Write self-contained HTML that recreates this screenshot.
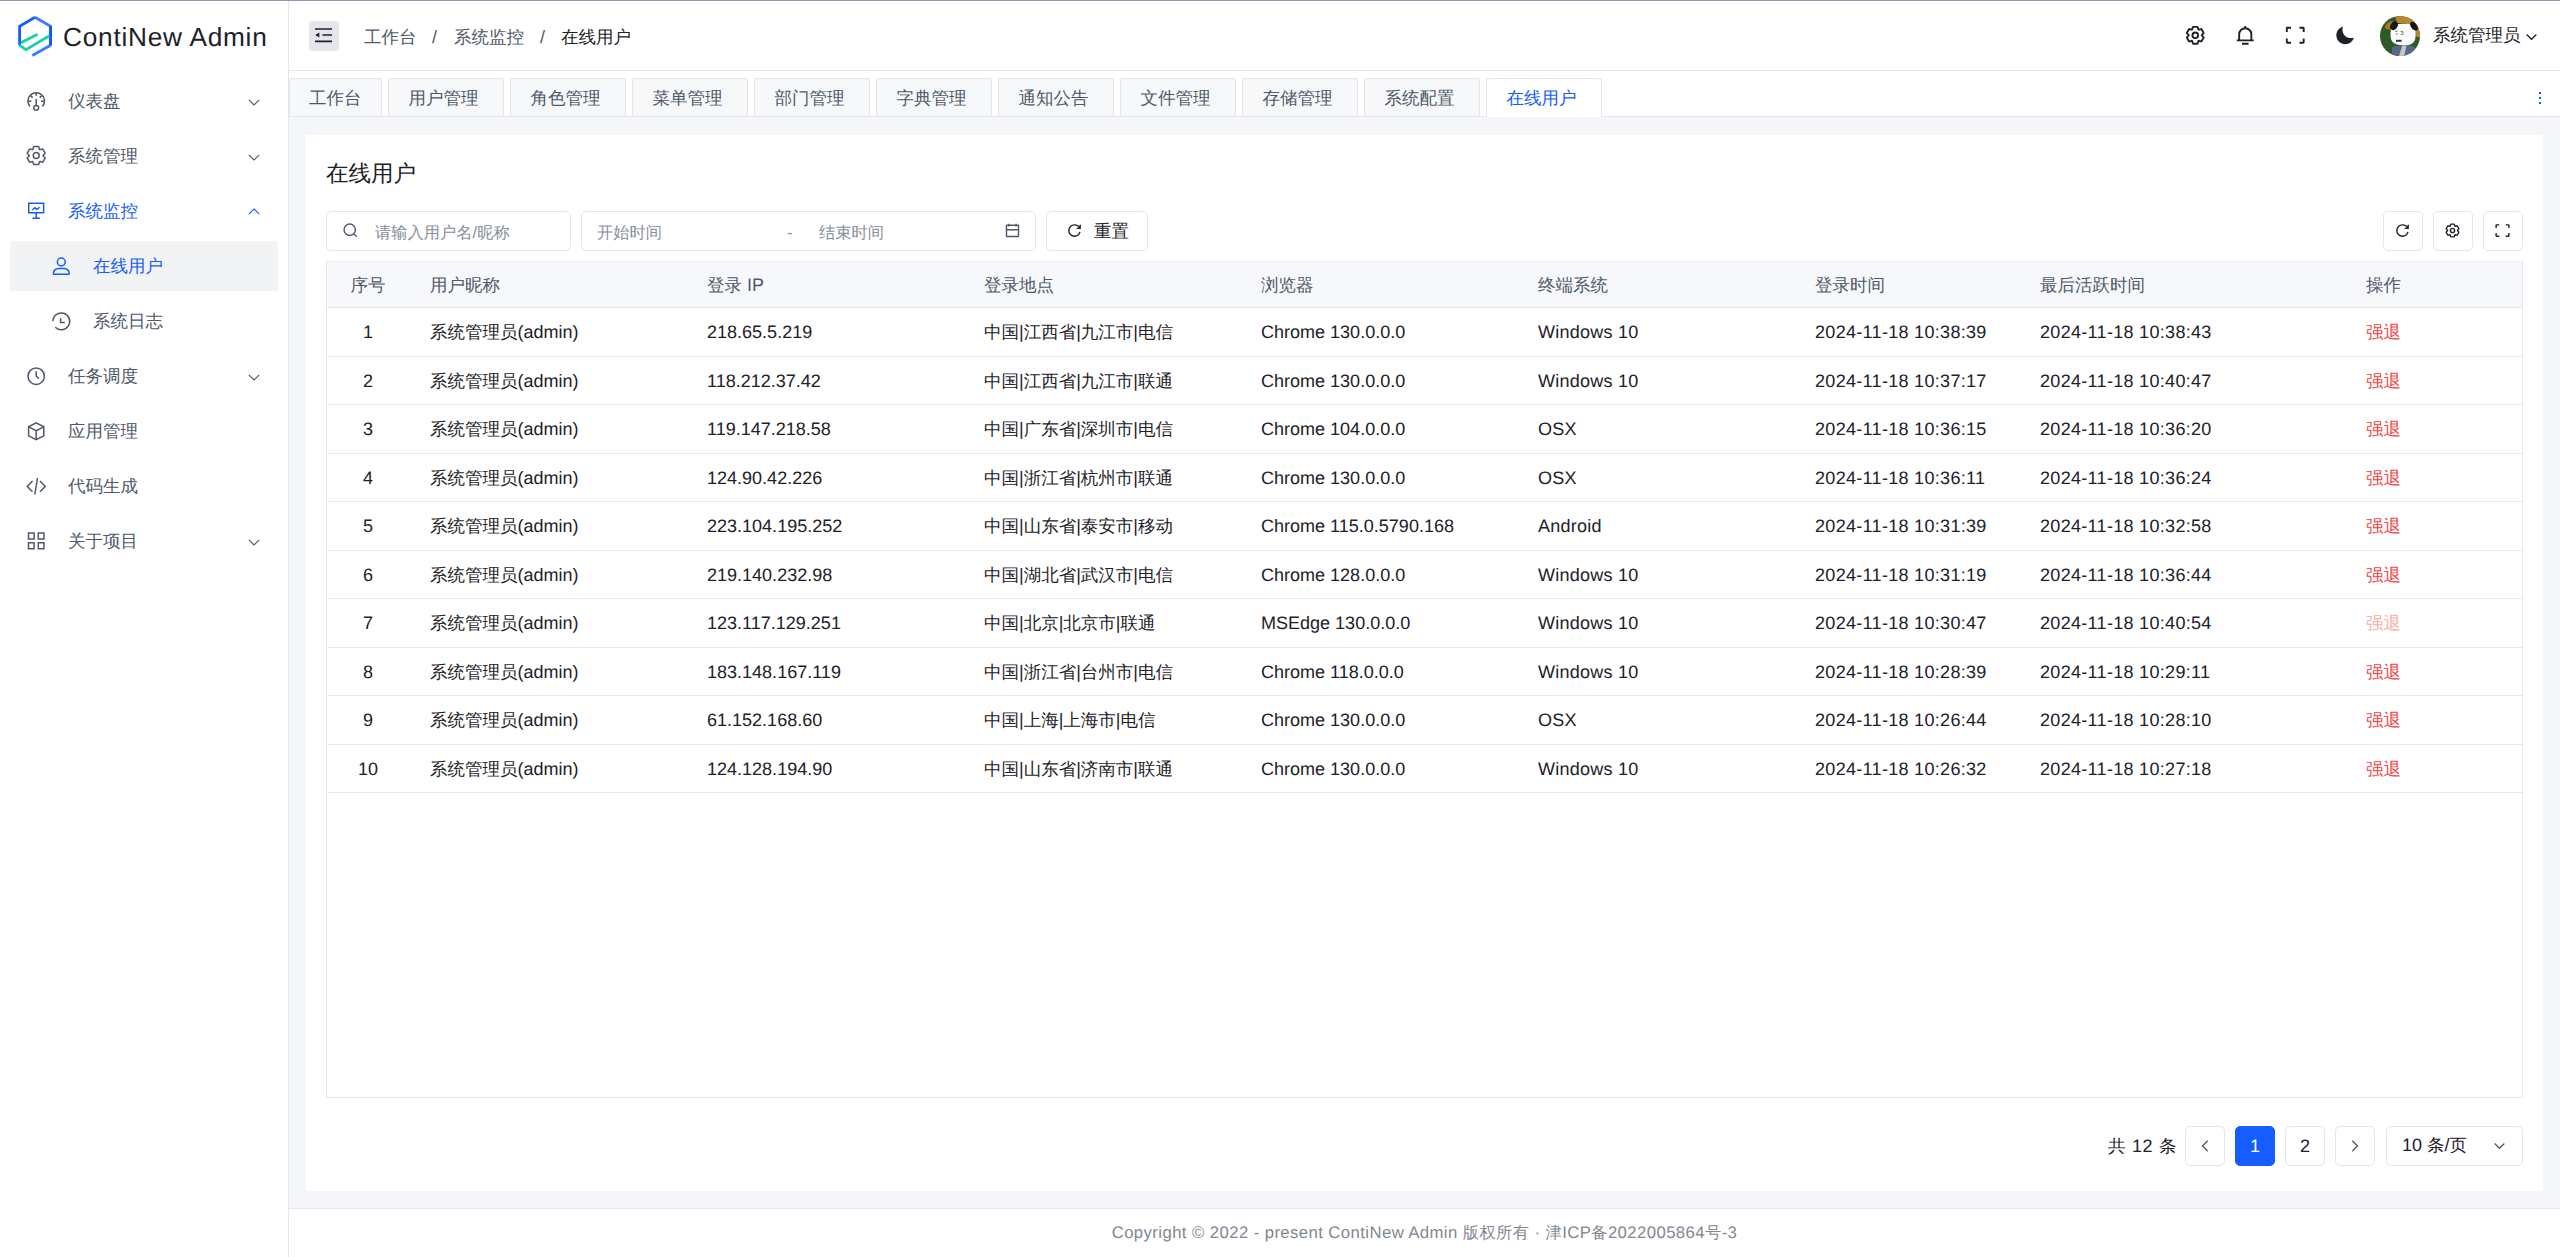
<!DOCTYPE html><html><head><meta charset="utf-8"><style>@font-face{font-family:"LS";src:local("Liberation Sans");size-adjust:103%;unicode-range:U+0000-024F,U+2010-206F}
*{box-sizing:border-box;margin:0;padding:0}
html,body{width:2560px;height:1257px;overflow:hidden;background:#fff}
body{font-family:"LS","Liberation Sans",sans-serif;font-size:17.5px;text-rendering:geometricPrecision;color:#1d2129;position:relative}
.abs{position:absolute}
svg{display:block;overflow:visible}
#topline{left:0;top:0;width:2560px;height:1px;background:#8a9ab0;z-index:5}
#side{left:0;top:0;width:289px;height:1257px;border-right:1px solid #e5e6eb;background:#fff}
.logo-t{left:63px;top:18px;font-size:25.5px;line-height:38px;color:#1d2129;letter-spacing:0.75px}
.mt{line-height:50px;white-space:nowrap}
#hdr{left:289px;top:0;width:2271px;height:71px;border-bottom:1px solid #e5e6eb;background:#fff}
.bc{top:2px;line-height:71px;color:#4e5969}
#tabs{left:289px;top:71px;width:2271px;height:46px;background:#fff;border-bottom:1px solid #e5e6eb}
.tab{position:absolute;top:78px;height:38px;border:1px solid #e5e6eb;border-bottom:none;border-radius:3px 3px 0 0;background:#f7f8fa;color:#4e5969;line-height:39px;white-space:nowrap}
.tab span{position:absolute;top:0}
.tab.on{background:#fff;color:#165dff;height:39px;z-index:2}
#content{left:289px;top:117px;width:2271px;height:1091px;background:#f4f6fa}
#card{left:306px;top:135px;width:2237px;height:1056px;background:#fff}
#footer{left:289px;top:1208px;width:2271px;height:49px;border-top:1px solid #e5e6eb;background:#fff;text-align:center;color:#7f8894;font-size:16.25px;line-height:48px;letter-spacing:0.41px}
.inp{position:absolute;top:211px;height:40px;border:1px solid #e2e6ed;border-radius:5px;background:#fff}
.ph{position:absolute;line-height:38px;color:#86909c;font-size:16.25px;white-space:nowrap}
.btn{position:absolute;top:211px;width:40px;height:40px;border:1px solid #e2e6ed;border-radius:5px;background:#fff}
#tbl{left:326px;top:261px;width:2197px;height:837px;border:1px solid #e4e7ee;border-top:none;background:#fff}
.th{top:262px;line-height:47px;color:#4e5969;white-space:nowrap}
.td{line-height:48px;color:#1d2129;white-space:nowrap}
.red{color:#f53f3f}
.red.dis{color:#fbaca3}
.pg{position:absolute;top:1126px;width:40px;height:40px;border:1px solid #e2e6ed;border-radius:5px;background:#fff;text-align:center;line-height:38px;color:#1d2129}
</style></head><body>
<div id="topline" class="abs"></div>
<div id="side" class="abs"></div>
<svg class="abs" style="left:14px;top:13px" width="42" height="44" viewBox="14 13 42 44">
<g fill="none" stroke-width="2.8" stroke-linecap="butt" stroke-linejoin="miter">
<path d="M19.6 45.3 V26.2 L35 17.2" stroke="#165dff"/>
<path d="M35 17.2 L50.6 26.2 V45.3" stroke="#3a7bff"/>
<path d="M50.6 45.3 L32.3 55.4" stroke="#3a7bff"/>
<path d="M50.6 26.2 V45.3" stroke="#1551ff"/>
<path d="M21 42.8 L37.6 34.3" stroke="#19d0a8"/>
<path d="M19.2 45 L26 49.6 L49.4 35.8" stroke="#19d0a8"/>
</g></svg>
<div class="abs logo-t">ContiNew Admin</div>
<svg style="position:absolute;left:20px;top:85px;width:32px;height:32px;color:#4e5969" viewBox="0 0 32 32" fill="none" stroke="currentColor" stroke-width="1.5" stroke-linecap="butt" stroke-linejoin="miter"><path d="M9.9 21.4A8.3 8.3 0 1 1 22.5 21.4"/><path d="M16.2 8V10.8M10.6 10.6 12.6 12.6M21.8 10.6 19.8 12.6M7.9 16.3H11.4M21 16.3H24.5M16.2 14V20.3"/><circle cx="16.2" cy="22.8" r="2.4"/></svg>
<div class="abs mt" style="left:68px;top:76px;color:#4e5969">仪表盘</div>
<svg style="position:absolute;left:245.5px;top:94px;width:16px;height:16px;color:#4e5969" viewBox="0 0 48 48" fill="none" stroke="currentColor" stroke-width="3.4" ><path d="M39.6 17.443 24.043 33 8.487 17.443"/></svg>
<svg style="position:absolute;left:20px;top:140px;width:32px;height:32px;color:#4e5969" viewBox="0 0 32 32" fill="none" stroke="currentColor" stroke-width="1.5" stroke-linecap="butt" stroke-linejoin="miter"><g transform="translate(16.2 15.6) scale(0.5) translate(-24 -24)" stroke-width="3"><path d="M18.797 6.732A1 1 0 0 1 19.76 6h8.48a1 1 0 0 1 .964.732l1.285 4.628a1 1 0 0 0 1.213.7l4.651-1.2a1 1 0 0 1 1.116.468l4.24 7.344a1 1 0 0 1-.153 1.2L38.193 23.3a1 1 0 0 0 0 1.402l3.364 3.427a1 1 0 0 1 .153 1.2l-4.24 7.344a1 1 0 0 1-1.116.468l-4.65-1.2a1 1 0 0 0-1.214.7l-1.285 4.628a1 1 0 0 1-.964.732h-8.48a1 1 0 0 1-.963-.732L17.51 36.64a1 1 0 0 0-1.213-.7l-4.65 1.2a1 1 0 0 1-1.116-.468l-4.24-7.344a1 1 0 0 1 .153-1.2L9.809 24.7a1 1 0 0 0 0-1.402l-3.364-3.427a1 1 0 0 1-.153-1.2l4.24-7.344a1 1 0 0 1 1.116-.468l4.65 1.2a1 1 0 0 0 1.213-.7l1.286-4.628Z"/><path d="M30 24a6 6 0 1 1-12 0 6 6 0 0 1 12 0Z"/></g></svg>
<div class="abs mt" style="left:68px;top:131px;color:#4e5969">系统管理</div>
<svg style="position:absolute;left:245.5px;top:149px;width:16px;height:16px;color:#4e5969" viewBox="0 0 48 48" fill="none" stroke="currentColor" stroke-width="3.4" ><path d="M39.6 17.443 24.043 33 8.487 17.443"/></svg>
<svg style="position:absolute;left:20px;top:195px;width:32px;height:32px;color:#165dff" viewBox="0 0 32 32" fill="none" stroke="currentColor" stroke-width="1.5" stroke-linecap="butt" stroke-linejoin="miter"><path d="M8.75 8.35H23.65V17.85H8.75Z"/><path d="M16.2 17.85V23.3M12.5 23.3H19.9"/><path d="M12.3 15 14.9 12.8 16.8 14.6 19.5 12.2"/></svg>
<div class="abs mt" style="left:68px;top:186px;color:#165dff">系统监控</div>
<svg style="position:absolute;left:245.5px;top:204px;width:16px;height:16px;color:#165dff" viewBox="0 0 48 48" fill="none" stroke="currentColor" stroke-width="3.4" ><path d="M39.6 30.557 24.043 15 8.487 30.557"/></svg>
<div class="abs" style="left:10px;top:241px;width:268px;height:50px;background:#f2f3f5;border-radius:3px"></div>
<svg style="position:absolute;left:45px;top:250px;width:32px;height:32px;color:#165dff" viewBox="0 0 32 32" fill="none" stroke="currentColor" stroke-width="1.5" stroke-linecap="butt" stroke-linejoin="miter"><circle cx="16.3" cy="12" r="3.9"/><path d="M8.4 23.4c0-2.8 2.4-4.9 5-4.9h5.8c2.6 0 5 2.1 5 4.9v0.4a0.5 0.5 0 0 1-0.5 0.5H8.9a0.5 0.5 0 0 1-0.5-0.5Z"/></svg>
<div class="abs mt" style="left:93px;top:241px;color:#165dff">在线用户</div>
<svg style="position:absolute;left:45px;top:305px;width:32px;height:32px;color:#4e5969" viewBox="0 0 32 32" fill="none" stroke="currentColor" stroke-width="1.5" stroke-linecap="butt" stroke-linejoin="miter"><path d="M7.9 16.3A8.4 8.4 0 1 1 10.3 22.2"/><path d="M15.6 13.2V17.6H19.8"/></svg>
<div class="abs mt" style="left:93px;top:296px;color:#4e5969">系统日志</div>
<svg style="position:absolute;left:20px;top:360px;width:32px;height:32px;color:#4e5969" viewBox="0 0 32 32" fill="none" stroke="currentColor" stroke-width="1.5" stroke-linecap="butt" stroke-linejoin="miter"><circle cx="16.2" cy="16.2" r="8.2"/><path d="M16.2 11.2V16L18.9 18.6"/></svg>
<div class="abs mt" style="left:68px;top:351px;color:#4e5969">任务调度</div>
<svg style="position:absolute;left:245.5px;top:369px;width:16px;height:16px;color:#4e5969" viewBox="0 0 48 48" fill="none" stroke="currentColor" stroke-width="3.4" ><path d="M39.6 17.443 24.043 33 8.487 17.443"/></svg>
<svg style="position:absolute;left:20px;top:415px;width:32px;height:32px;color:#4e5969" viewBox="0 0 32 32" fill="none" stroke="currentColor" stroke-width="1.5" stroke-linecap="butt" stroke-linejoin="miter"><path d="M16.2 7.8 23.8 11.8V20.8L16.2 24.6 8.6 20.8V11.8Z"/><path d="M8.6 11.8 16.2 15.6 23.8 11.8M16.2 15.6V24.6"/></svg>
<div class="abs mt" style="left:68px;top:406px;color:#4e5969">应用管理</div>
<svg style="position:absolute;left:20px;top:470px;width:32px;height:32px;color:#4e5969" viewBox="0 0 32 32" fill="none" stroke="currentColor" stroke-width="1.5" stroke-linecap="butt" stroke-linejoin="miter"><path d="M12.5 11 7.3 16.5 12.5 21.7M20 11 25.2 16.5 20 21.7M17.5 8 14.8 24.5"/></svg>
<div class="abs mt" style="left:68px;top:461px;color:#4e5969">代码生成</div>
<svg style="position:absolute;left:20px;top:525px;width:32px;height:32px;color:#4e5969" viewBox="0 0 32 32" fill="none" stroke="currentColor" stroke-width="1.5" stroke-linecap="butt" stroke-linejoin="miter"><path d="M8.5 8H14.1V14H8.5ZM18.3 8H23.9V14H18.3ZM8.5 17.8H14.1V23.8H8.5ZM18.3 17.8H23.9V23.8H18.3Z"/></svg>
<div class="abs mt" style="left:68px;top:516px;color:#4e5969">关于项目</div>
<svg style="position:absolute;left:245.5px;top:534px;width:16px;height:16px;color:#4e5969" viewBox="0 0 48 48" fill="none" stroke="currentColor" stroke-width="3.4" ><path d="M39.6 17.443 24.043 33 8.487 17.443"/></svg>
<div id="hdr" class="abs"></div>
<div class="abs" style="left:309px;top:21px;width:30px;height:30px;border-radius:4px;background:#e5e6eb"></div>
<svg style="position:absolute;left:309px;top:21px;width:30px;height:30px" viewBox="0 0 30 30" fill="none" stroke="#1d2129" stroke-width="1.6"><path d="M6 8H23M13.5 14H23M6 20.4H23"/><path d="M6.2 14 10.3 11.6V16.4Z" fill="#1d2129" stroke="none"/></svg>
<div class="abs bc" style="left:364px">工作台</div>
<div class="abs bc" style="left:432px;color:#4e5969">/</div>
<div class="abs bc" style="left:454px">系统监控</div>
<div class="abs bc" style="left:540px;color:#4e5969">/</div>
<div class="abs bc" style="left:561px;color:#1d2129">在线用户</div>
<svg style="position:absolute;left:2184px;top:24px;width:22.5px;height:22.5px;color:#1d2129" viewBox="0 0 48 48" fill="none" stroke="currentColor" stroke-width="4" ><path d="M18.797 6.732A1 1 0 0 1 19.76 6h8.48a1 1 0 0 1 .964.732l1.285 4.628a1 1 0 0 0 1.213.7l4.651-1.2a1 1 0 0 1 1.116.468l4.24 7.344a1 1 0 0 1-.153 1.2L38.193 23.3a1 1 0 0 0 0 1.402l3.364 3.427a1 1 0 0 1 .153 1.2l-4.24 7.344a1 1 0 0 1-1.116.468l-4.65-1.2a1 1 0 0 0-1.214.7l-1.285 4.628a1 1 0 0 1-.964.732h-8.48a1 1 0 0 1-.963-.732L17.51 36.64a1 1 0 0 0-1.213-.7l-4.65 1.2a1 1 0 0 1-1.116-.468l-4.24-7.344a1 1 0 0 1 .153-1.2L9.809 24.7a1 1 0 0 0 0-1.402l-3.364-3.427a1 1 0 0 1-.153-1.2l4.24-7.344a1 1 0 0 1 1.116-.468l4.65 1.2a1 1 0 0 0 1.213-.7l1.286-4.628Z"/><path d="M30 24a6 6 0 1 1-12 0 6 6 0 0 1 12 0Z"/></svg>
<svg style="position:absolute;left:2234px;top:24px;width:22.5px;height:22.5px;color:#1d2129" viewBox="0 0 48 48" fill="none" stroke="currentColor" stroke-width="4" ><path d="M24 9c7.18 0 13 5.82 13 13v13H11V22c0-7.18 5.82-13 13-13Zm0 0V4M6 35h36m-25 7h14"/></svg>
<svg style="position:absolute;left:2284px;top:24px;width:22.5px;height:22.5px;color:#1d2129" viewBox="0 0 48 48" fill="none" stroke="currentColor" stroke-width="4" ><path d="M42 17V9a1 1 0 0 0-1-1h-8M6 17V9a1 1 0 0 1 1-1h8m27 23v8a1 1 0 0 1-1 1h-8M6 31v8a1 1 0 0 0 1 1h8"/></svg>
<svg style="position:absolute;left:2334px;top:24px;width:22.5px;height:22.5px;color:#1d2129" viewBox="0 0 48 48" fill="none" stroke="currentColor" stroke-width="4" ><path fill="currentColor" stroke="none" d="M42.108 29.769c.124-.387-.258-.736-.645-.613A17.99 17.99 0 0 1 36 30c-9.941 0-18-8.059-18-18 0-1.904.296-3.74.844-5.463.123-.387-.226-.768-.613-.645C10.558 8.334 5 15.518 5 24c0 10.493 8.507 19 19 19 8.482 0 15.666-5.558 18.108-13.231Z"/></svg>
<div class="abs" style="left:2380px;top:16px;width:40px;height:40px;border-radius:50%;overflow:hidden">
<svg width="40" height="40" viewBox="0 0 40 40">
<rect width="40" height="40" fill="#2d5a28"/>
<path d="M15 0H40V21H36.5C35.5 13 31 8 24 7H17Z" fill="#b8862b"/>
<path d="M5 10C7 6.5 10 5 13.5 5L11.5 14.5C9 13.5 7 12.5 5 12.5Z" fill="#a9791f"/>
<path d="M12 10.5C14 8 20 7.5 27 7.8C33 8 35.7 11 35.7 18C35.7 26 33 29.3 24 29.3C16 29.3 10.5 27 10.5 19.5C10.5 15 11 12.5 12 10.5Z" fill="#fbfbfb"/>
<ellipse cx="14" cy="9.8" rx="3.4" ry="4.6" transform="rotate(35 14 9.8)" fill="#151515"/>
<ellipse cx="34" cy="10.2" rx="3" ry="5" transform="rotate(-38 34 10.2)" fill="#151515"/>
<path d="M15.3 15.2h2.2M15.8 18h1.8M20.8 15.2l2.8 1.2M20.8 18.2h2.8" stroke="#666" stroke-width="1.1"/>
<rect x="16" y="23.8" width="5.6" height="2" fill="#333"/>
<path d="M12 40V31.5C14 29.8 18 29.2 24 29.2C30 29.2 33.5 30 35 32V40Z" fill="#56688a"/>
<path d="M19 40L22.3 29.6H26.5L24.2 40Z" fill="#c6c6c6"/>
</svg></div>
<div class="abs" style="left:2433px;top:0;line-height:70px;color:#1d2129">系统管理员</div>
<svg style="position:absolute;left:2524px;top:29px;width:15px;height:15px;color:#1d2129" viewBox="0 0 48 48" fill="none" stroke="currentColor" stroke-width="4" ><path d="M39.6 17.443 24.043 33 8.487 17.443"/></svg>
<div id="tabs" class="abs"></div>
<div class="tab" style="left:289px;width:93px"><span style="left:19px">工作台</span></div>
<div class="tab" style="left:387.6px;width:116px"><span style="left:20px">用户管理</span></div>
<div class="tab" style="left:509.6px;width:116px"><span style="left:20px">角色管理</span></div>
<div class="tab" style="left:631.6px;width:116px"><span style="left:20px">菜单管理</span></div>
<div class="tab" style="left:753.6px;width:116px"><span style="left:20px">部门管理</span></div>
<div class="tab" style="left:875.6px;width:116px"><span style="left:20px">字典管理</span></div>
<div class="tab" style="left:997.6px;width:116px"><span style="left:20px">通知公告</span></div>
<div class="tab" style="left:1119.6px;width:116px"><span style="left:20px">文件管理</span></div>
<div class="tab" style="left:1241.6px;width:116px"><span style="left:20px">存储管理</span></div>
<div class="tab" style="left:1363.6px;width:116px"><span style="left:20px">系统配置</span></div>
<div class="tab on" style="left:1485.6px;width:116px"><span style="left:20px">在线用户</span></div>
<div class="abs" style="left:2539px;top:91.5px;width:2.4px;height:2.4px;background:#165dff"></div><div class="abs" style="left:2539px;top:96.5px;width:2.4px;height:2.4px;background:#165dff"></div><div class="abs" style="left:2539px;top:101.5px;width:2.4px;height:2.4px;background:#165dff"></div>
<div id="content" class="abs"></div>
<div id="card" class="abs"></div>
<div class="abs" style="left:326px;top:153px;font-size:22.5px;line-height:40px;color:#1d2129">在线用户</div>
<div class="inp" style="left:326px;width:245px"></div>
<svg style="position:absolute;left:342px;top:222px;width:17px;height:17px;color:#4e5969" viewBox="0 0 48 48" fill="none" stroke="currentColor" stroke-width="4" ><path d="M33.072 33.071c6.248-6.248 6.248-16.379 0-22.627-6.249-6.249-16.38-6.249-22.628 0-6.248 6.248-6.248 16.379 0 22.627 6.248 6.248 16.38 6.248 22.628 0Zm0 0 8.485 8.485"/></svg>
<div class="ph" style="left:375px;top:213.5px">请输入用户名/昵称</div>
<div class="inp" style="left:581px;width:455px"></div>
<div class="ph" style="left:597px;top:213.5px">开始时间</div>
<div class="ph" style="left:787px;top:213.5px">-</div>
<div class="ph" style="left:819px;top:213.5px">结束时间</div>
<svg style="position:absolute;left:1004px;top:222px;width:17px;height:17px;color:#4e5969" viewBox="0 0 48 48" fill="none" stroke="currentColor" stroke-width="4" ><path d="M7 22h34M14 5v8m20-8v8M8 41h32a1 1 0 0 0 1-1V10a1 1 0 0 0-1-1H8a1 1 0 0 0-1 1v30a1 1 0 0 0 1 1Z"/></svg>
<div class="inp" style="left:1046px;width:102px"></div>
<svg style="position:absolute;left:1066px;top:222px;width:17px;height:17px;color:#1d2129" viewBox="0 0 48 48" fill="none" stroke="currentColor" stroke-width="4" ><path d="M38.837 18C36.463 12.136 30.715 8 24 8 15.163 8 8 15.163 8 24s7.163 16 16 16c7.455 0 13.72-5.1 15.496-12M40 8v10H30"/></svg>
<div class="abs" style="left:1094px;top:211px;line-height:40px;color:#1d2129">重置</div>
<div class="btn" style="left:2383px"></div>
<svg style="position:absolute;left:2394px;top:222px;width:17px;height:17px;color:#1d2129" viewBox="0 0 48 48" fill="none" stroke="currentColor" stroke-width="4" ><path d="M38.837 18C36.463 12.136 30.715 8 24 8 15.163 8 8 15.163 8 24s7.163 16 16 16c7.455 0 13.72-5.1 15.496-12M40 8v10H30"/></svg>
<div class="btn" style="left:2433px"></div>
<svg style="position:absolute;left:2444px;top:222px;width:17px;height:17px;color:#1d2129" viewBox="0 0 48 48" fill="none" stroke="currentColor" stroke-width="4" ><path d="M18.797 6.732A1 1 0 0 1 19.76 6h8.48a1 1 0 0 1 .964.732l1.285 4.628a1 1 0 0 0 1.213.7l4.651-1.2a1 1 0 0 1 1.116.468l4.24 7.344a1 1 0 0 1-.153 1.2L38.193 23.3a1 1 0 0 0 0 1.402l3.364 3.427a1 1 0 0 1 .153 1.2l-4.24 7.344a1 1 0 0 1-1.116.468l-4.65-1.2a1 1 0 0 0-1.214.7l-1.285 4.628a1 1 0 0 1-.964.732h-8.48a1 1 0 0 1-.963-.732L17.51 36.64a1 1 0 0 0-1.213-.7l-4.65 1.2a1 1 0 0 1-1.116-.468l-4.24-7.344a1 1 0 0 1 .153-1.2L9.809 24.7a1 1 0 0 0 0-1.402l-3.364-3.427a1 1 0 0 1-.153-1.2l4.24-7.344a1 1 0 0 1 1.116-.468l4.65 1.2a1 1 0 0 0 1.213-.7l1.286-4.628Z"/><path d="M30 24a6 6 0 1 1-12 0 6 6 0 0 1 12 0Z"/></svg>
<div class="btn" style="left:2483px"></div>
<svg style="position:absolute;left:2494px;top:222px;width:17px;height:17px;color:#1d2129" viewBox="0 0 48 48" fill="none" stroke="currentColor" stroke-width="4" ><path d="M42 17V9a1 1 0 0 0-1-1h-8M6 17V9a1 1 0 0 1 1-1h8m27 23v8a1 1 0 0 1-1 1h-8M6 31v8a1 1 0 0 0 1 1h8"/></svg>
<div id="tbl" class="abs"></div>
<div class="abs" style="left:326px;top:261px;width:2197px;height:47px;background:#f7f8fb;border:1px solid #e4e7ee;border-top-color:#eceef3"></div>
<div class="abs th" style="left:333px;width:70px;text-align:center">序号</div>
<div class="abs th" style="left:430px">用户昵称</div>
<div class="abs th" style="left:707px">登录 IP</div>
<div class="abs th" style="left:984px">登录地点</div>
<div class="abs th" style="left:1261px">浏览器</div>
<div class="abs th" style="left:1538px">终端系统</div>
<div class="abs th" style="left:1815px">登录时间</div>
<div class="abs th" style="left:2040px">最后活跃时间</div>
<div class="abs th" style="left:2366px">操作</div>
<div class="abs" style="left:327px;top:355.5px;width:2195px;height:1px;background:#e6e9ef"></div>
<div class="abs td" style="top:308.0px;left:333px;width:70px;text-align:center">1</div>
<div class="abs td" style="top:308.0px;left:430px">系统管理员(admin)</div>
<div class="abs td" style="top:308.0px;left:707px">218.65.5.219</div>
<div class="abs td" style="top:308.0px;left:984px">中国|江西省|九江市|电信</div>
<div class="abs td" style="top:308.0px;left:1261px">Chrome 130.0.0.0</div>
<div class="abs td" style="top:308.0px;left:1538px;letter-spacing:0.25px">Windows 10</div>
<div class="abs td" style="top:308.0px;left:1815px;letter-spacing:0.3px">2024-11-18 10:38:39</div>
<div class="abs td" style="top:308.0px;left:2040px;letter-spacing:0.3px">2024-11-18 10:38:43</div>
<div class="abs td red" style="top:308.0px;left:2366px">强退</div>
<div class="abs" style="left:327px;top:404.0px;width:2195px;height:1px;background:#e6e9ef"></div>
<div class="abs td" style="top:356.5px;left:333px;width:70px;text-align:center">2</div>
<div class="abs td" style="top:356.5px;left:430px">系统管理员(admin)</div>
<div class="abs td" style="top:356.5px;left:707px">118.212.37.42</div>
<div class="abs td" style="top:356.5px;left:984px">中国|江西省|九江市|联通</div>
<div class="abs td" style="top:356.5px;left:1261px">Chrome 130.0.0.0</div>
<div class="abs td" style="top:356.5px;left:1538px;letter-spacing:0.25px">Windows 10</div>
<div class="abs td" style="top:356.5px;left:1815px;letter-spacing:0.3px">2024-11-18 10:37:17</div>
<div class="abs td" style="top:356.5px;left:2040px;letter-spacing:0.3px">2024-11-18 10:40:47</div>
<div class="abs td red" style="top:356.5px;left:2366px">强退</div>
<div class="abs" style="left:327px;top:452.5px;width:2195px;height:1px;background:#e6e9ef"></div>
<div class="abs td" style="top:405.0px;left:333px;width:70px;text-align:center">3</div>
<div class="abs td" style="top:405.0px;left:430px">系统管理员(admin)</div>
<div class="abs td" style="top:405.0px;left:707px">119.147.218.58</div>
<div class="abs td" style="top:405.0px;left:984px">中国|广东省|深圳市|电信</div>
<div class="abs td" style="top:405.0px;left:1261px">Chrome 104.0.0.0</div>
<div class="abs td" style="top:405.0px;left:1538px;letter-spacing:0.25px">OSX</div>
<div class="abs td" style="top:405.0px;left:1815px;letter-spacing:0.3px">2024-11-18 10:36:15</div>
<div class="abs td" style="top:405.0px;left:2040px;letter-spacing:0.3px">2024-11-18 10:36:20</div>
<div class="abs td red" style="top:405.0px;left:2366px">强退</div>
<div class="abs" style="left:327px;top:501.0px;width:2195px;height:1px;background:#e6e9ef"></div>
<div class="abs td" style="top:453.5px;left:333px;width:70px;text-align:center">4</div>
<div class="abs td" style="top:453.5px;left:430px">系统管理员(admin)</div>
<div class="abs td" style="top:453.5px;left:707px">124.90.42.226</div>
<div class="abs td" style="top:453.5px;left:984px">中国|浙江省|杭州市|联通</div>
<div class="abs td" style="top:453.5px;left:1261px">Chrome 130.0.0.0</div>
<div class="abs td" style="top:453.5px;left:1538px;letter-spacing:0.25px">OSX</div>
<div class="abs td" style="top:453.5px;left:1815px;letter-spacing:0.3px">2024-11-18 10:36:11</div>
<div class="abs td" style="top:453.5px;left:2040px;letter-spacing:0.3px">2024-11-18 10:36:24</div>
<div class="abs td red" style="top:453.5px;left:2366px">强退</div>
<div class="abs" style="left:327px;top:549.5px;width:2195px;height:1px;background:#e6e9ef"></div>
<div class="abs td" style="top:502.0px;left:333px;width:70px;text-align:center">5</div>
<div class="abs td" style="top:502.0px;left:430px">系统管理员(admin)</div>
<div class="abs td" style="top:502.0px;left:707px">223.104.195.252</div>
<div class="abs td" style="top:502.0px;left:984px">中国|山东省|泰安市|移动</div>
<div class="abs td" style="top:502.0px;left:1261px">Chrome 115.0.5790.168</div>
<div class="abs td" style="top:502.0px;left:1538px;letter-spacing:0.25px">Android</div>
<div class="abs td" style="top:502.0px;left:1815px;letter-spacing:0.3px">2024-11-18 10:31:39</div>
<div class="abs td" style="top:502.0px;left:2040px;letter-spacing:0.3px">2024-11-18 10:32:58</div>
<div class="abs td red" style="top:502.0px;left:2366px">强退</div>
<div class="abs" style="left:327px;top:598.0px;width:2195px;height:1px;background:#e6e9ef"></div>
<div class="abs td" style="top:550.5px;left:333px;width:70px;text-align:center">6</div>
<div class="abs td" style="top:550.5px;left:430px">系统管理员(admin)</div>
<div class="abs td" style="top:550.5px;left:707px">219.140.232.98</div>
<div class="abs td" style="top:550.5px;left:984px">中国|湖北省|武汉市|电信</div>
<div class="abs td" style="top:550.5px;left:1261px">Chrome 128.0.0.0</div>
<div class="abs td" style="top:550.5px;left:1538px;letter-spacing:0.25px">Windows 10</div>
<div class="abs td" style="top:550.5px;left:1815px;letter-spacing:0.3px">2024-11-18 10:31:19</div>
<div class="abs td" style="top:550.5px;left:2040px;letter-spacing:0.3px">2024-11-18 10:36:44</div>
<div class="abs td red" style="top:550.5px;left:2366px">强退</div>
<div class="abs" style="left:327px;top:646.5px;width:2195px;height:1px;background:#e6e9ef"></div>
<div class="abs td" style="top:599.0px;left:333px;width:70px;text-align:center">7</div>
<div class="abs td" style="top:599.0px;left:430px">系统管理员(admin)</div>
<div class="abs td" style="top:599.0px;left:707px">123.117.129.251</div>
<div class="abs td" style="top:599.0px;left:984px">中国|北京|北京市|联通</div>
<div class="abs td" style="top:599.0px;left:1261px">MSEdge 130.0.0.0</div>
<div class="abs td" style="top:599.0px;left:1538px;letter-spacing:0.25px">Windows 10</div>
<div class="abs td" style="top:599.0px;left:1815px;letter-spacing:0.3px">2024-11-18 10:30:47</div>
<div class="abs td" style="top:599.0px;left:2040px;letter-spacing:0.3px">2024-11-18 10:40:54</div>
<div class="abs td red dis" style="top:599.0px;left:2366px">强退</div>
<div class="abs" style="left:327px;top:695.0px;width:2195px;height:1px;background:#e6e9ef"></div>
<div class="abs td" style="top:647.5px;left:333px;width:70px;text-align:center">8</div>
<div class="abs td" style="top:647.5px;left:430px">系统管理员(admin)</div>
<div class="abs td" style="top:647.5px;left:707px">183.148.167.119</div>
<div class="abs td" style="top:647.5px;left:984px">中国|浙江省|台州市|电信</div>
<div class="abs td" style="top:647.5px;left:1261px">Chrome 118.0.0.0</div>
<div class="abs td" style="top:647.5px;left:1538px;letter-spacing:0.25px">Windows 10</div>
<div class="abs td" style="top:647.5px;left:1815px;letter-spacing:0.3px">2024-11-18 10:28:39</div>
<div class="abs td" style="top:647.5px;left:2040px;letter-spacing:0.3px">2024-11-18 10:29:11</div>
<div class="abs td red" style="top:647.5px;left:2366px">强退</div>
<div class="abs" style="left:327px;top:743.5px;width:2195px;height:1px;background:#e6e9ef"></div>
<div class="abs td" style="top:696.0px;left:333px;width:70px;text-align:center">9</div>
<div class="abs td" style="top:696.0px;left:430px">系统管理员(admin)</div>
<div class="abs td" style="top:696.0px;left:707px">61.152.168.60</div>
<div class="abs td" style="top:696.0px;left:984px">中国|上海|上海市|电信</div>
<div class="abs td" style="top:696.0px;left:1261px">Chrome 130.0.0.0</div>
<div class="abs td" style="top:696.0px;left:1538px;letter-spacing:0.25px">OSX</div>
<div class="abs td" style="top:696.0px;left:1815px;letter-spacing:0.3px">2024-11-18 10:26:44</div>
<div class="abs td" style="top:696.0px;left:2040px;letter-spacing:0.3px">2024-11-18 10:28:10</div>
<div class="abs td red" style="top:696.0px;left:2366px">强退</div>
<div class="abs" style="left:327px;top:792.0px;width:2195px;height:1px;background:#e6e9ef"></div>
<div class="abs td" style="top:744.5px;left:333px;width:70px;text-align:center">10</div>
<div class="abs td" style="top:744.5px;left:430px">系统管理员(admin)</div>
<div class="abs td" style="top:744.5px;left:707px">124.128.194.90</div>
<div class="abs td" style="top:744.5px;left:984px">中国|山东省|济南市|联通</div>
<div class="abs td" style="top:744.5px;left:1261px">Chrome 130.0.0.0</div>
<div class="abs td" style="top:744.5px;left:1538px;letter-spacing:0.25px">Windows 10</div>
<div class="abs td" style="top:744.5px;left:1815px;letter-spacing:0.3px">2024-11-18 10:26:32</div>
<div class="abs td" style="top:744.5px;left:2040px;letter-spacing:0.3px">2024-11-18 10:27:18</div>
<div class="abs td red" style="top:744.5px;left:2366px">强退</div>
<div class="abs" style="left:2108px;top:1126px;line-height:40px;color:#1d2129;letter-spacing:0.7px">共 12 条</div>
<div class="pg" style="left:2185px"></div>
<svg style="position:absolute;left:2197px;top:1138px;width:16px;height:16px;color:#4e5969" viewBox="0 0 48 48" fill="none" stroke="currentColor" stroke-width="4" ><path d="M32 8.4 16.444 23.956 32 39.513"/></svg>
<div class="pg" style="left:2235px;background:#165dff;border-color:#165dff;color:#fff">1</div>
<div class="pg" style="left:2285px">2</div>
<div class="pg" style="left:2335px"></div>
<svg style="position:absolute;left:2347px;top:1138px;width:16px;height:16px;color:#4e5969" viewBox="0 0 48 48" fill="none" stroke="currentColor" stroke-width="4" ><path d="m16 39.513 15.556-15.557L16 8.4"/></svg>
<div class="pg" style="left:2386px;width:137px"></div>
<div class="abs" style="left:2402px;top:1125px;line-height:40px;color:#1d2129">10 条/页</div>
<svg style="position:absolute;left:2492px;top:1138px;width:15px;height:15px;color:#4e5969" viewBox="0 0 48 48" fill="none" stroke="currentColor" stroke-width="4" ><path d="M39.6 17.443 24.043 33 8.487 17.443"/></svg>
<div id="footer" class="abs">Copyright © 2022 - present ContiNew Admin 版权所有 · 津ICP备2022005864号-3</div>
</body></html>
